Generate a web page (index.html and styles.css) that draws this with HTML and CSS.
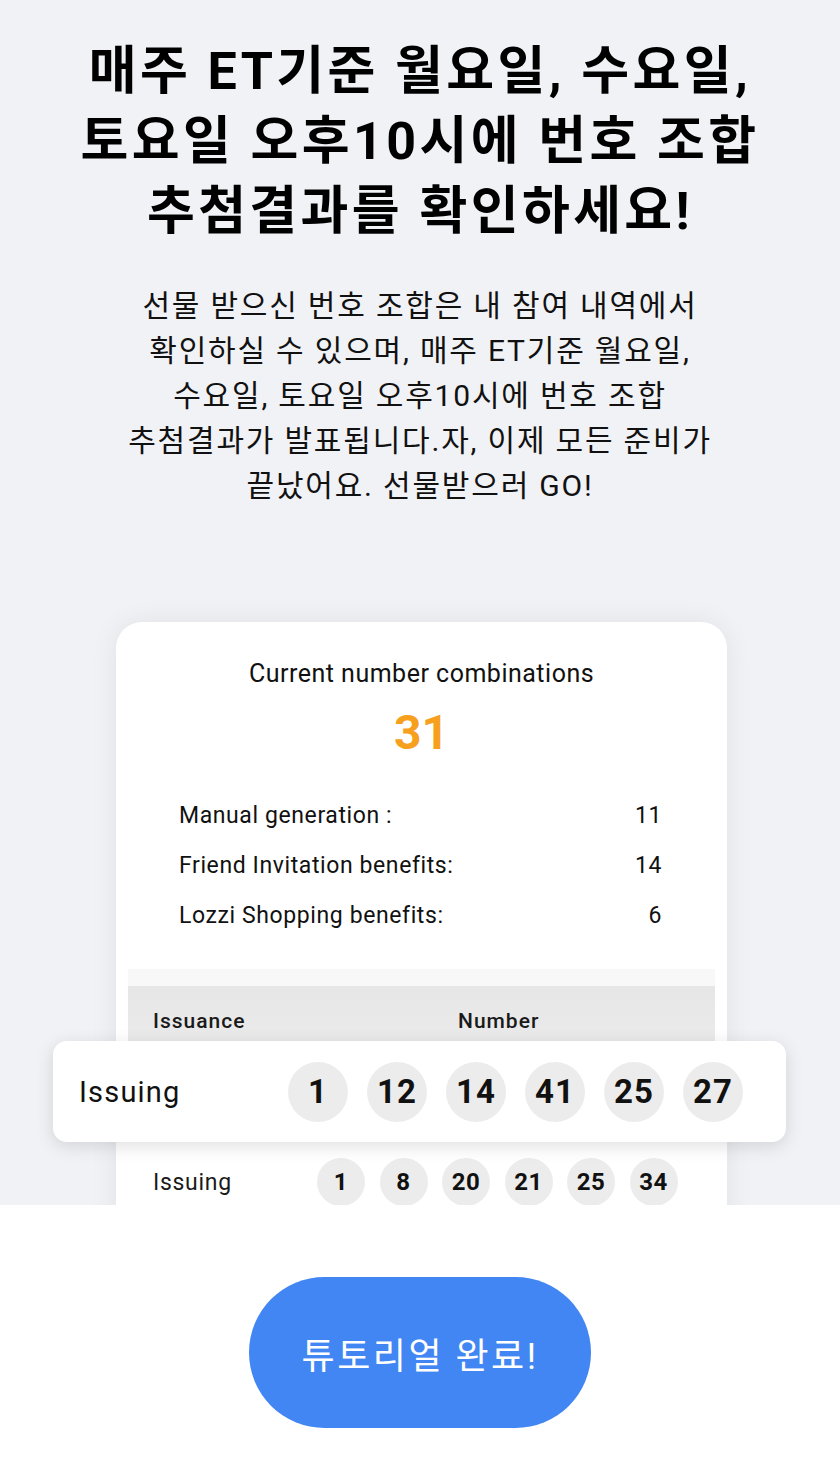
FILE: index.html
```
<!DOCTYPE html>
<html lang="ko">
<head>
<meta charset="utf-8">
<title>튜토리얼</title>
<link rel="stylesheet" href="styles.css">
</head>
<body>
<main class="hero">
  <h1 class="title">매주 ET기준 월요일, 수요일,<br>토요일 오후10시에 번호 조합<br>추첨결과를 확인하세요!</h1>
  <p class="desc">선물 받으신 번호 조합은 내 참여 내역에서<br>확인하실 수 있으며, 매주 ET기준 월요일,<br>수요일, 토요일 오후10시에 번호 조합<br>추첨결과가 발표됩니다.자, 이제 모든 준비가<br>끝났어요. 선물받으러 GO!</p>
  <div class="stage">
    <section class="card">
      <div class="card-title">Current number combinations</div>
      <div class="total">31</div>
      <ul class="stats">
        <li class="stat"><span>Manual generation :</span><span>11</span></li>
        <li class="stat"><span>Friend Invitation benefits:</span><span>14</span></li>
        <li class="stat"><span>Lozzi Shopping benefits:</span><span>6</span></li>
      </ul>
      <div class="table">
        <div class="thead"><span class="th-issue">Issuance</span><span class="th-num">Number</span></div>
        <div class="row row-under"></div>
        <div class="row">
          <span class="row-label">Issuing</span>
          <div class="balls">
            <span class="ball">1</span><span class="ball">8</span><span class="ball">20</span><span class="ball">21</span><span class="ball">25</span><span class="ball">34</span>
          </div>
        </div>
      </div>
    </section>
    <div class="highlight">
      <span class="hl-label">Issuing</span>
      <div class="balls balls-lg">
        <span class="ball">1</span><span class="ball">12</span><span class="ball">14</span><span class="ball">41</span><span class="ball">25</span><span class="ball">27</span>
      </div>
    </div>
  </div>
</main>
<footer class="footer">
  <button class="done-btn" type="button">튜토리얼 완료!</button>
</footer>
</body>
</html>
```

FILE: styles.css
```
* { box-sizing: border-box; }
html, body { margin: 0; padding: 0; }
body {
  width: 840px;
  background: #ffffff;
  font-family: Roboto, "Noto Sans CJK KR", sans-serif;
  color: #111;
}
.hero {
  height: 1205px;
  overflow: hidden;
  background: #f1f2f6;
  padding-top: 37px;
}
.title {
  margin: 0;
  text-align: center;
  font-size: 52px;
  line-height: 70px;
  font-weight: 700;
  color: #000;
  letter-spacing: 3.4px;
}
.desc {
  margin: 36px 0 0;
  text-align: center;
  font-size: 30px;
  line-height: 45px;
  font-weight: 400;
  color: #111;
  letter-spacing: 1.8px;
}
.stage {
  position: relative;
  margin-top: 114px;
}
.card {
  margin-left: 116px;
  width: 611px;
  height: 700px;
  background: #fff;
  border-radius: 26px;
  box-shadow: 0 0 28px rgba(0, 0, 0, 0.07);
  padding: 36px 12px 0;
}
.card-title {
  text-align: center;
  font-size: 25px;
  line-height: 32px;
  color: #111;
  letter-spacing: 0.5px;
}
.total {
  margin-top: 15px;
  text-align: center;
  font-size: 48px;
  line-height: 56px;
  font-weight: 700;
  color: #f6a01e;
}
.stats {
  list-style: none;
  margin: 29px 0 0;
  padding: 0 53px 0 51px;
}
.stat {
  display: flex;
  justify-content: space-between;
  align-items: center;
  height: 50px;
  font-size: 23px;
  color: #111;
  letter-spacing: 0.6px;
}
.table {
  margin-top: 29px;
}
.thead {
  height: 87px;
  background: linear-gradient(#f8f8f8 0, #f8f8f8 17px, #e6e6e6 17px, #ececec 100%);
  display: flex;
  align-items: flex-start;
  padding: 38px 0 0 25px;
  font-size: 21px;
  line-height: 28px;
  font-weight: 500;
  color: #1a1a1a;
  letter-spacing: 1px;
}
.th-issue { width: 305px; }
.row {
  display: flex;
  align-items: center;
  height: 62px;
  padding-left: 25px;
}
.row-under { height: 95px; }
.row-label {
  width: 164px;
  font-size: 23px;
  color: #1a1a1a;
  letter-spacing: 0.7px;
}
.balls {
  display: flex;
  gap: 14.5px;
}
.ball {
  width: 48px;
  height: 48px;
  border-radius: 50%;
  background: #ececec;
  display: flex;
  align-items: center;
  justify-content: center;
  font-size: 24px;
  font-weight: 700;
  color: #111;
  letter-spacing: 0.5px;
}
.highlight {
  position: absolute;
  left: 53px;
  top: 419px;
  width: 733px;
  height: 101px;
  background: #fff;
  border-radius: 14px;
  box-shadow: 0 4px 18px rgba(0, 0, 0, 0.13);
  display: flex;
  align-items: center;
  padding-left: 26px;
}
.hl-label {
  width: 209px;
  font-size: 29px;
  color: #111;
  letter-spacing: 1.2px;
}
.balls-lg { gap: 19px; }
.balls-lg .ball {
  width: 60px;
  height: 60px;
  font-size: 33px;
  letter-spacing: 1px;
}
.footer {
  height: 252px;
  display: flex;
  justify-content: center;
  padding-top: 72px;
}
.done-btn {
  width: 342px;
  height: 151px;
  border: 0;
  border-radius: 76px;
  background: #4286f4;
  color: #fff;
  font-family: Roboto, "Noto Sans CJK KR", sans-serif;
  font-size: 36px;
  font-weight: 400;
  letter-spacing: 2.5px;
  cursor: pointer;
}
```
